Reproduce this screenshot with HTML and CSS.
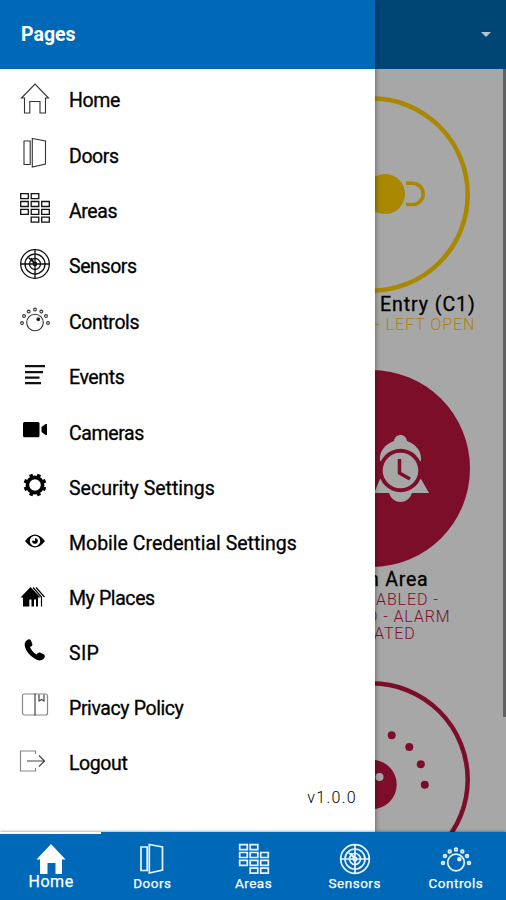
FILE: index.html
```html
<!DOCTYPE html>
<html lang="en">
<head>
    <meta charset="UTF-8">
    <meta name="viewport" content="width=device-width, initial-scale=1.0">
    <title>Pages</title>
    <link rel="stylesheet" href="styles.css">
</head>
<body>
    <!-- shared icons -->
    <svg class="sprite">
        <symbol id="doors" viewBox="0 0 34 34">
            <path d="M6 5h6.200v23.500H6zM14.300 2.500l13.200 2.500v23l-13.200 3z"/>
        </symbol>
        <symbol id="areas" viewBox="0 0 34 34">
            <path d="M2.700 2.700h7.600v5H2.700zM13.200 2.700h7.600v5h-7.600zM2.700 10.500h7.600v5H2.700zM13.200 10.500h7.600v5h-7.600zM23.700 10.500h7.600v5h-7.600zM2.700 18.400h7.600v5H2.700zM13.200 18.400h7.600v5h-7.600zM23.700 18.400h7.600v5h-7.600zM13.200 26.200h7.600v5h-7.600zM23.700 26.200h7.600v5h-7.600z"/>
        </symbol>
        <symbol id="sensors" viewBox="0 0 34 34">
            <circle cx="17" cy="17" r="14.300"/>
            <circle cx="17" cy="17" r="10"/>
            <circle cx="17" cy="17" r="5.500"/>
            <circle cx="17" cy="17" r="1.700"/>
            <path d="M17 2v30M2 17h30M17 17l-6.500-6.500M17 17l-4-6"/>
        </symbol>
        <symbol id="controls" viewBox="0 0 34 34">
            <circle cx="17" cy="20.500" r="8.300"/>
            <circle cx="20.300" cy="17.300" r="1.400" fill="currentColor"/>
            <g class="dots">
                <circle cx="4" cy="21" r="1.400"/>
                <circle cx="6" cy="14" r="1.400"/>
                <circle cx="10.700" cy="9.500" r="1.400"/>
                <circle cx="17" cy="7.500" r="1.400"/>
                <circle cx="23.300" cy="9.500" r="1.400"/>
                <circle cx="28" cy="14" r="1.400"/>
                <circle cx="30" cy="21" r="1.400"/>
            </g>
        </symbol>
    </svg>

    <div class="app">
        <div class="topbar">
            <span class="arrow"></span>
        </div>

        <div class="content">
            <div class="cards">
                <div class="card">
                    <svg class="disc" viewBox="0 0 197 197">
                        <circle cx="98.500" cy="98.500" r="96.200" fill="none" stroke="#a98800" stroke-width="4.500"/>
                        <circle cx="112" cy="98" r="20" fill="#a98800"/>
                        <path d="M133 87.200h6.500a10.700 10.700 0 0 1 0 21.400H133" fill="none" stroke="#a98800" stroke-width="3.500"/>
                    </svg>
                    <div class="title entry">Entry (C1)</div>
                    <div class="status yellow"><span>- LEFT OPEN</span></div>
                </div>
                <div class="card">
                    <svg class="disc" viewBox="0 0 197 197">
                        <circle cx="98.500" cy="98.500" r="98.500" fill="#7d0e2a"/>
                        <path d="M107 91V88c0-8 6-14 14-17 1-8 12-8 13 0 8 3 14 9 14 17v3zM107 109l-6 14h15c4 12 19 12 23 0h17l-8-14z" fill="#a7a7a7"/>
                        <circle cx="127.500" cy="100.500" r="21.700" fill="#7d0e2a"/>
                        <circle cx="127.500" cy="100.500" r="17.800" fill="#a7a7a7"/>
                        <path d="M126.500 89v14l10.500 6" fill="none" stroke="#7d0e2a" stroke-width="3.500"/>
                    </svg>
                    <div class="title area">n Area</div>
                    <div class="status red"><span class="s1">ABLED -</span><span class="s2">D - ALARM</span><span class="s3">ATED</span></div>
                </div>
                <div class="card">
                    <svg class="disc" viewBox="0 0 197 197">
                        <circle cx="98.500" cy="98.500" r="96.200" fill="none" stroke="#7d0e2a" stroke-width="4.500"/>
                        <g fill="#7d0e2a">
                            <circle cx="99" cy="103.500" r="24.700"/>
                            <circle cx="118.700" cy="54.300" r="4"/>
                            <circle cx="136.300" cy="66" r="4"/>
                            <circle cx="147.800" cy="83.300" r="4"/>
                            <circle cx="151.800" cy="103.800" r="4"/>
                        </g>
                        <circle cx="106.500" cy="96" r="4" fill="#a7a7a7"/>
                    </svg>
                </div>
            </div>
            <div class="scrollbar"></div>
        </div>

        <div class="drawer">
            <div class="drawer-header">Pages</div>
            <ul class="menu">
                <li><svg class="thin" viewBox="0 0 34 34"><path d="M3.500 17 17 3l13.500 14h-3v15h-5.500V20.500H11.800V32H6.500V17z"/></svg><span>Home</span></li>
                <li><svg class="thin"><use href="#doors"/></svg><span>Doors</span></li>
                <li><svg><use href="#areas"/></svg><span>Areas</span></li>
                <li><svg><use href="#sensors"/></svg><span>Sensors</span></li>
                <li><svg class="thin"><use href="#controls"/></svg><span>Controls</span></li>
                <li><svg class="bars" viewBox="0 0 34 34"><path d="M7 8.200h20M7 14.200h18M7 19.700h14.500M7 25.200h16"/></svg><span>Events</span></li>
                <li><svg class="solid" viewBox="0 0 34 34"><rect x="5" y="9" width="16.500" height="15.300" rx="1.500"/><path d="M29 11v11h-1.500l-4-3v-5l4-3z"/></svg><span>Cameras</span></li>
                <li><svg class="gear" viewBox="0 0 34 34"><circle cx="17" cy="17" r="7.600"/><path d="M20.300 9l1-2.600M25 13.700l2.600-1M25 20.300l2.600 1M20.300 25l1 2.600M13.700 25l-1 2.600M9 20.300l-2.600 1M9 13.700l-2.600-1M13.700 9l-1-2.600"/></svg><span class="wide">Security Settings</span></li>
                <li><svg class="solid" viewBox="0 0 34 34"><path fill-rule="evenodd" d="M7 17q10-13 20 0-10 13-20 0zM17 11.800a5.200 5.200 0 1 0 .01 0z"/><path d="M17 14.200a2.800 2.800 0 1 1-2.700 2.200l2.700.6z"/></svg><span class="wide">Mobile Credential Settings</span></li>
                <li class="short"><svg class="solid" viewBox="0 0 34 34"><path d="M2.500 18.500 12.500 8l10 10.500H20v9h-2v-7h-2v7h-2.500v-7h-2.200v7H5v-9z"/><path d="M15 8.500l8.500 9.500v9.500M18 8.500l8.500 9.500" fill="none" stroke="#000" stroke-width="1.200"/></svg><span>My Places</span></li>
                <li class="short"><svg class="solid" viewBox="0 0 34 34"><path d="M8 8q3-3 5-.5l1.500 4q0 1.500-2.500 2.500 2 5 6.500 7.500 1.500-2.500 3.500-2l4 2q2 2-.5 4.500-3.500 3-9-.500Q9 21 7 14q-1-4 1-6z"/></svg><span class="sip">SIP</span></li>
                <li><svg class="pale" viewBox="0 0 34 34"><rect x="4.500" y="6" width="25" height="21" rx="2"/><path d="M17 5.500v22M21 6.500V13l2.500-1.500L26 13V6.500" class="dark"/></svg><span>Privacy Policy</span></li>
                <li><svg class="pale" viewBox="0 0 34 34"><path d="M17.500 10V7h-15v20h15v-3"/><path d="M9 17h17M21 11.500l5.500 5.500-5.500 5.500" class="dark"/></svg><span>Logout</span></li>
            </ul>
            <div class="version">v1.0.0</div>
        </div>

        <div class="tabs">
            <div class="tab active"><svg viewBox="0 0 34 34"><path d="M2.500 17.500 17 2l14.500 15.500H28V32h-6.500V21h-8v11H6V17.500z" fill="currentColor" stroke="none"/></svg><span>Home</span></div>
            <div class="tab"><svg><use href="#doors"/></svg><span>Doors</span></div>
            <div class="tab"><svg><use href="#areas"/></svg><span>Areas</span></div>
            <div class="tab"><svg><use href="#sensors"/></svg><span>Sensors</span></div>
            <div class="tab"><svg><use href="#controls"/></svg><span>Controls</span></div>
        </div>
    </div>
</body>
</html>
```

FILE: styles.css
```css
* {
    box-sizing: border-box;
}

body {
    margin: 0;
    font-family: Roboto, "Liberation Sans", sans-serif;
    color: #000;
}

.sprite {
    display: none;
}

.app {
    position: relative;
    display: flex;
    flex-direction: column;
    width: 506px;
    height: 900px;
    overflow: hidden;
    background-color: #a7a7a7;
}

.topbar {
    display: flex;
    flex: none;
    align-items: center;
    justify-content: flex-end;
    height: 69px;
    padding-right: 15px;
    background-color: #004675;
}

.arrow {
    border: 5px solid transparent;
    border-top-color: #b4c4d0;
    border-bottom: 0;
}

.content {
    display: flex;
    flex: 1;
    min-height: 0;
    overflow: hidden;
    justify-content: space-between;
}

.cards {
    width: 500px;
    padding-top: 27px;
}

.card {
    padding-left: 273px;
    height: 274px;
}

.card + .card {
    height: 311px;
}

.disc {
    display: block;
    width: 197px;
    height: 197px;
}

.title {
    padding-top: 1px;
    font-size: 19.5px;
    font-weight: 400;
    line-height: 22px;
    white-space: nowrap;
    -webkit-text-stroke: 0.3px #000;
}

.entry {
    padding-left: 107px;
    letter-spacing: 0.95px;
}

.area {
    padding-left: 95px;
    margin-top: 1px;
    letter-spacing: 0.8px;
}

.status {
    font-size: 16px;
    font-weight: 300;
    line-height: 17px;
    letter-spacing: 0.9px;
    white-space: nowrap;
}

.status span {
    display: block;
    height: 17px;
}

.yellow {
    padding-left: 102px;
    color: #a98412;
    letter-spacing: 1px;
}

.red {
    color: #7d0e2a;
}

.s1 {
    padding-left: 103px;
}

.s2 {
    padding-left: 94px;
}

.s3 {
    padding-left: 101px;
}

.scrollbar {
    width: 3px;
    height: 648px;
    background-color: #606060;
}

.drawer {
    position: absolute;
    top: 0;
    left: 0;
    width: 375px;
    height: 833px;
    background-color: #fff;
    box-shadow: 0 0 5px rgba(0, 0, 0, 0.5);
}

.drawer-header {
    height: 69px;
    padding-left: 21px;
    background-color: #0069b7;
    color: #fff;
    font-size: 19.5px;
    font-weight: 700;
    line-height: 69px;
}

.menu {
    list-style: none;
    margin: 0;
    padding: 4px 0 0 18px;
}

.menu li {
    display: flex;
    align-items: center;
    gap: 17px;
    height: 55.4px;
    font-size: 19.5px;
    font-weight: 400;
    letter-spacing: -0.4px;
    -webkit-text-stroke: 0.3px #000;
}

.menu .short {
    height: 54.6px;
}

.menu .wide {
    letter-spacing: 0;
}

.menu .sip {
    letter-spacing: 0.3px;
}

.menu svg {
    width: 34px;
    height: 34px;
    margin-top: -6px;
    fill: none;
    stroke: #111;
    stroke-width: 1.3;
}

.menu .thin {
    stroke: #333;
    stroke-width: 1.1;
}

.menu .bars {
    stroke-width: 2.2;
}

.menu .gear {
    stroke: #000;
    stroke-width: 3.6;
}

.menu .solid {
    fill: #000;
    stroke: none;
}

.menu .pale {
    stroke: #888;
    stroke-width: 1.2;
}

.dark {
    stroke: #444;
}

.version {
    padding: 0 18px 0 0;
    margin-top: -3px;
    text-align: right;
    font-size: 16px;
    line-height: 20px;
    font-weight: 300;
    letter-spacing: 1.3px;
}

.tabs {
    position: relative;
    display: flex;
    flex: none;
    height: 68px;
    background-color: #0069b7;
    color: #fff;
    box-shadow: 0 0 3px rgba(0, 0, 0, 0.5);
}

.tab {
    display: flex;
    flex: 1;
    flex-direction: column;
    align-items: center;
    padding: 10px 0 0 1px;
    border-top: 0 solid #fff;
    font-size: 13.5px;
    font-weight: 400;
    line-height: 16px;
    letter-spacing: 0.5px;
    -webkit-text-stroke: 0.25px #fff;
}

.tab svg {
    width: 34px;
    height: 34px;
    margin-bottom: -1px;
    fill: none;
    stroke: #e8f3ff;
    stroke-width: 1.7;
}

.tab .dots {
    fill: #fff;
}

.active {
    padding-top: 8px;
    border-top-width: 2px;
    font-size: 16px;
}

.active svg {
    margin-bottom: -2px;
}
```
